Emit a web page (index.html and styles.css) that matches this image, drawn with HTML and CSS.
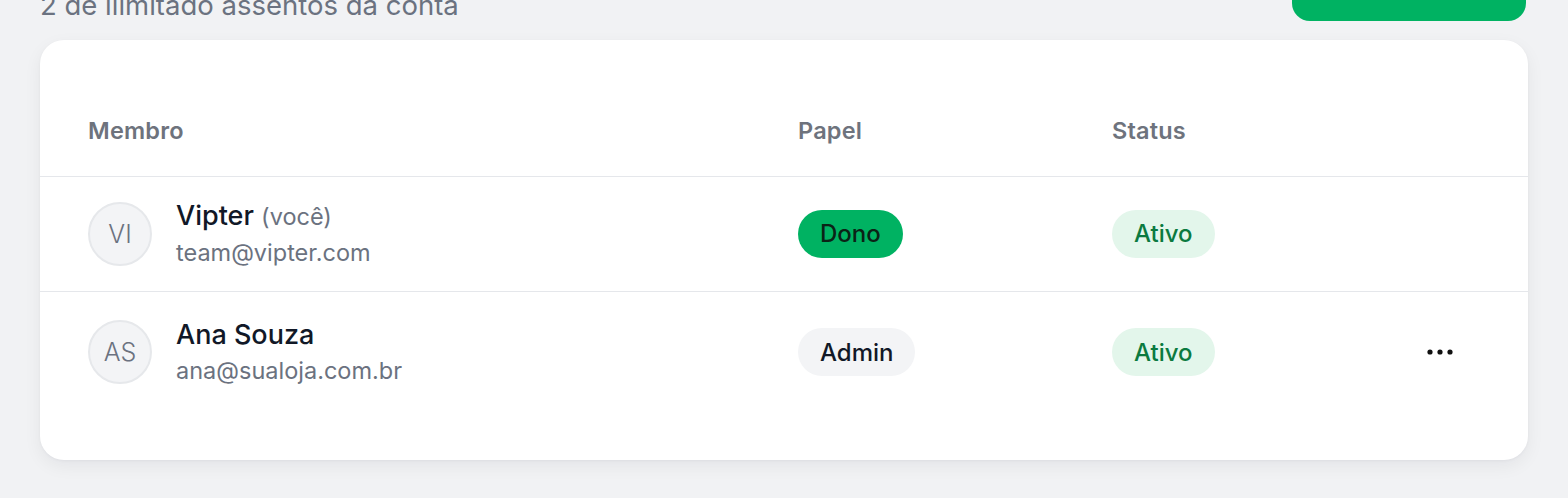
FILE: index.html
```html
<!DOCTYPE html>
<html lang="pt-BR">
<head>
<meta charset="utf-8">
<title>Membros</title>
<link rel="stylesheet" href="styles.css">
</head>
<body>
<div class="page">
  <div class="top">
    <p class="subtitle">2 de ilimitado assentos da conta</p>
    <button class="invite">Convidar membro</button>
  </div>
  <div class="card">
    <div class="row head">
      <div class="th">Membro</div>
      <div class="th">Papel</div>
      <div class="th">Status</div>
      <div class="th"></div>
    </div>
    <div class="row first">
      <div class="member">
        <div class="avatar">VI</div>
        <div class="info">
          <div class="name">Vipter <span class="you">(você)</span></div>
          <div class="email">team@vipter.com</div>
        </div>
      </div>
      <div><span class="badge owner">Dono</span></div>
      <div><span class="badge active">Ativo</span></div>
      <div></div>
    </div>
    <div class="row second">
      <div class="member">
        <div class="avatar">AS</div>
        <div class="info">
          <div class="name">Ana Souza</div>
          <div class="email">ana@sualoja.com.br</div>
        </div>
      </div>
      <div><span class="badge admin">Admin</span></div>
      <div><span class="badge active">Ativo</span></div>
      <div class="actions">
        <svg class="dots" width="28" height="8" viewBox="0 0 28 8" aria-hidden="true">
          <circle cx="4" cy="4" r="2.6" fill="#111"/>
          <circle cx="14" cy="4" r="2.6" fill="#111"/>
          <circle cx="24" cy="4" r="2.6" fill="#111"/>
        </svg>
      </div>
    </div>
  </div>
</div>
</body>
</html>
```

FILE: styles.css
```css
* { box-sizing: border-box; }
html, body { margin: 0; padding: 0; }
body {
  background: #f1f2f4;
  font-family: Inter, "Noto Sans", "Liberation Sans", sans-serif;
  color: #111827;
  height: 498px;
  overflow: hidden;
}
.page {
  padding: 0 40px;
}
.top {
  display: flex;
  justify-content: space-between;
  align-items: flex-end;
  margin-top: -51px;
  margin-bottom: 17px;
  padding-right: 2px;
}
.subtitle {
  margin: 0;
  font-size: 27.5px;
  line-height: 36px;
  color: #6b7280;
}
.invite {
  width: 234px;
  height: 72px;
  margin-bottom: 2px;
  border: 0;
  border-radius: 18px;
  background: #00b262;
  color: #fff;
  font-family: inherit;
  font-size: 18px;
  font-weight: 600;
  padding: 0 0 34px;
}
.card {
  background: #fff;
  border-radius: 24px;
  box-shadow: 0 6px 18px rgba(17, 24, 39, 0.06), 0 1px 3px rgba(17, 24, 39, 0.04);
  padding-bottom: 48px;
}
.row {
  display: grid;
  grid-template-columns: 710px 314px 288px 80px;
  align-items: center;
  padding: 22px 48px 23px;
  border-bottom: 1.5px solid #e5e7eb;
}
.row:last-child { border-bottom: 0; }
.row.head {
  padding-top: 76px;
  padding-bottom: 30px;
}
.row.second {
  padding-top: 26px;
  padding-bottom: 26px;
}
.th {
  font-size: 23.5px;
  line-height: 30px;
  font-weight: 600;
  letter-spacing: 0.2px;
  color: #6e737d;
}
.member {
  display: flex;
  align-items: center;
  gap: 24px;
}
.avatar {
  width: 64px;
  height: 64px;
  border-radius: 50%;
  background: #f3f4f6;
  border: 2px solid #e6e8eb;
  display: flex;
  align-items: center;
  justify-content: center;
  font-size: 25px;
  font-weight: 300;
  color: #6b7280;
  flex: none;
}
.info {
  display: flex;
  flex-direction: column;
  gap: 4px;
}
.name {
  font-size: 27px;
  line-height: 34px;
  font-weight: 500;
  color: #111827;
}
.you {
  font-size: 23.5px;
  font-weight: 400;
  color: #6b7280;
}
.email {
  font-size: 23.5px;
  line-height: 30px;
  color: #6b7280;
}
.badge {
  display: inline-flex;
  align-items: center;
  height: 48px;
  padding: 0 22px;
  border-radius: 24px;
  font-size: 24px;
  font-weight: 500;
}
.badge.owner {
  background: #00b262;
  color: #0b2316;
}
.badge.active {
  background: #e3f6eb;
  color: #0b7a40;
}
.badge.admin {
  background: #f3f4f6;
  color: #111827;
}
.actions {
  display: flex;
  justify-content: center;
}
.dots { display: block; }
```
